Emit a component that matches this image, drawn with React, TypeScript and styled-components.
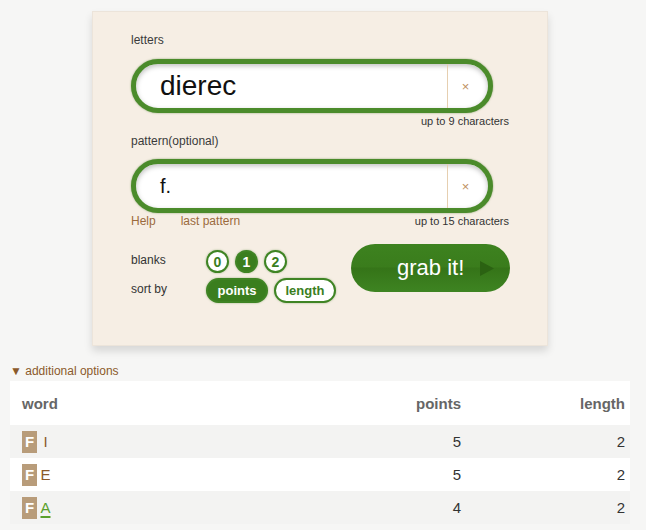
import React from "react";
import styled, { createGlobalStyle } from "styled-components";

const Global = createGlobalStyle`
  html, body { margin: 0; padding: 0; background: #f6f6f5; }
  body { font-family: "Liberation Sans", Arial, Helvetica, sans-serif; color: #333; }
`;

const Page = styled.div`
  width: 646px;
  height: 530px;
  overflow: hidden;
  padding-top: 11px;
  box-sizing: border-box;
`;

const Card = styled.div`
  margin-left: 92px;
  width: 456px;
  height: 335px;
  box-sizing: border-box;
  background: #f6eee4;
  border: 1px solid #ece4da;
  box-shadow: 0 5px 8px rgba(0, 0, 0, 0.13);
  padding: 21px 38px 0 38px;
  display: flex;
  flex-direction: column;
`;

const Label = styled.div`
  font-size: 12px;
  line-height: 15px;
  color: #3a3a3a;
  margin-top: ${(p: { $top?: number }) => p.$top ?? 0}px;
`;

const InputBox = styled.div`
  width: 362px;
  height: 54px;
  box-sizing: border-box;
  border: 5px solid #4b8b2b;
  border-radius: 27px;
  background: #fff;
  box-shadow: inset 0 2px 5px rgba(0, 0, 0, 0.25), 0 0 2px rgba(60, 110, 30, 0.6);
  display: flex;
  align-items: stretch;
  margin-top: ${(p: { $top: number }) => p.$top}px;
`;

const InputText = styled.div<{ $size: number }>`
  flex: 1;
  display: flex;
  align-items: center;
  padding-left: 24px;
  font-size: ${(p) => p.$size}px;
  color: #111;
  border-right: 1px solid #e6cfb0;
`;

const Clear = styled.div`
  width: 35px;
  display: flex;
  align-items: center;
  justify-content: center;
  color: #c09060;
  font-size: 13px;
  padding-right: 5px;
`;

const HintRow = styled.div`
  display: flex;
  align-items: baseline;
  height: 15px;
  font-size: 11px;
  line-height: 15px;
  margin-top: 1px;
`;

const Link = styled.span<{ $ml?: number }>`
  color: #9b6a3c;
  font-size: 12px;
  margin-left: ${(p) => p.$ml ?? 0}px;
`;

const Hint = styled.span`
  margin-left: auto;
  color: #333;
  font-size: 11px;
`;

const Options = styled.div`
  display: flex;
  margin-top: 15px;
`;

const OptGrid = styled.div`
  display: grid;
  grid-template-columns: 75px auto;
  row-gap: 5px;
  align-items: center;
  margin-top: 6px;
`;

const OptLabel = styled.div`
  font-size: 12px;
  color: #333;
  margin-top: -3px;
`;

const BtnGroup = styled.div`
  display: flex;
  gap: 6px;
`;

const Circle = styled.div<{ $on?: boolean }>`
  width: 23px;
  height: 23px;
  box-sizing: border-box;
  border-radius: 50%;
  border: 2px solid #3f8424;
  background: ${(p) => (p.$on ? "#3a7e1e" : "#fff")};
  color: ${(p) => (p.$on ? "#fff" : "#3a7e1e")};
  font-weight: bold;
  font-size: 14px;
  display: flex;
  align-items: center;
  justify-content: center;
  box-shadow: 0 0 2px rgba(60, 120, 30, 0.5);
`;

const Pill = styled.div<{ $on?: boolean; $w: number }>`
  width: ${(p) => p.$w}px;
  height: 25px;
  box-sizing: border-box;
  border-radius: 13px;
  border: 2px solid #3f8424;
  background: ${(p) => (p.$on ? "#3a7e1e" : "#fff")};
  color: ${(p) => (p.$on ? "#fff" : "#3a7e1e")};
  font-weight: bold;
  font-size: 13px;
  display: flex;
  align-items: center;
  justify-content: center;
  box-shadow: 0 0 2px rgba(60, 120, 30, 0.5);
`;

const Grab = styled.div`
  margin-left: auto;
  margin-right: -1px;
  width: 159px;
  height: 48px;
  border-radius: 24px;
  background: linear-gradient(#3d821f 0%, #3a7c1c 48%, #357418 50%, #3e8422 100%);
  display: flex;
  align-items: center;
  color: #fff;
  font-size: 22px;
  padding-left: 46px;
  box-sizing: border-box;
  gap: 15px;
`;

const Toggle = styled.div`
  margin: 17px 0 0 10px;
  font-size: 12px;
  color: #8b5a2b;
  height: 16px;
  line-height: 16px;
`;

const Table = styled.div`
  margin-left: 10px;
  margin-top: 2px;
  width: 620px;
`;

const Row = styled.div<{ $head?: boolean; $alt?: boolean }>`
  display: grid;
  grid-template-columns: 1fr 120px 164px;
  align-items: center;
  height: ${(p) => (p.$head ? 44 : 33)}px;
  background: ${(p) => (p.$head || !p.$alt ? "#fff" : "#f3f3f2")};
  padding: 0 5px 0 12px;
  box-sizing: border-box;
  font-size: 15px;
  font-weight: ${(p) => (p.$head ? "bold" : "normal")};
  color: ${(p) => (p.$head ? "#666" : "#333")};
`;

const Num = styled.div`
  text-align: right;
`;

const Word = styled.div`
  display: flex;
  align-items: center;
`;

const Tile = styled.span`
  width: 15px;
  height: 22px;
  background: #b89c7a;
  color: #fff;
  font-weight: bold;
  font-size: 15px;
  display: flex;
  align-items: center;
  justify-content: center;
`;

const Letter = styled.span<{ $blank?: boolean }>`
  width: 15px;
  margin-left: 1px;
  text-align: center;
  font-size: 15px;
  color: ${(p) => (p.$blank ? "#5aa02c" : "#8b5a2b")};
  text-decoration: ${(p) => (p.$blank ? "underline" : "none")};
  text-underline-offset: 3px;
  text-decoration-thickness: 2px;
`;

const rows = [
  { l: "I", p: 5, n: 2, blank: false },
  { l: "E", p: 5, n: 2, blank: false },
  { l: "A", p: 4, n: 2, blank: true },
];

export default function App() {
  return (
    <Page>
      <Global />
      <Card>
        <Label>letters</Label>
        <InputBox $top={11}>
          <InputText $size={28}>dierec</InputText>
          <Clear>×</Clear>
        </InputBox>
        <HintRow>
          <Hint>up to 9 characters</Hint>
        </HintRow>
        <Label $top={5}>pattern(optional)</Label>
        <InputBox $top={10}>
          <InputText $size={20}>f.</InputText>
          <Clear>×</Clear>
        </InputBox>
        <HintRow>
          <Link>Help</Link>
          <Link $ml={25}>last pattern</Link>
          <Hint>up to 15 characters</Hint>
        </HintRow>
        <Options>
          <OptGrid>
            <OptLabel>blanks</OptLabel>
            <BtnGroup>
              <Circle>0</Circle>
              <Circle $on>1</Circle>
              <Circle>2</Circle>
            </BtnGroup>
            <OptLabel>sort by</OptLabel>
            <BtnGroup>
              <Pill $on $w={62}>points</Pill>
              <Pill $w={62}>length</Pill>
            </BtnGroup>
          </OptGrid>
          <Grab>
            grab it!
            <svg width="16" height="17" viewBox="0 0 16 17">
              <polygon points="1,1 15,8.5 1,16" fill="#2b6212" />
            </svg>
          </Grab>
        </Options>
      </Card>
      <Toggle>▼ additional options</Toggle>
      <Table>
        <Row $head>
          <div>word</div>
          <Num>points</Num>
          <Num>length</Num>
        </Row>
        {rows.map((r, i) => (
          <Row key={i} $alt={i % 2 === 0}>
            <Word>
              <Tile>F</Tile>
              <Letter $blank={r.blank}>{r.l}</Letter>
            </Word>
            <Num>{r.p}</Num>
            <Num>{r.n}</Num>
          </Row>
        ))}
      </Table>
    </Page>
  );
}
